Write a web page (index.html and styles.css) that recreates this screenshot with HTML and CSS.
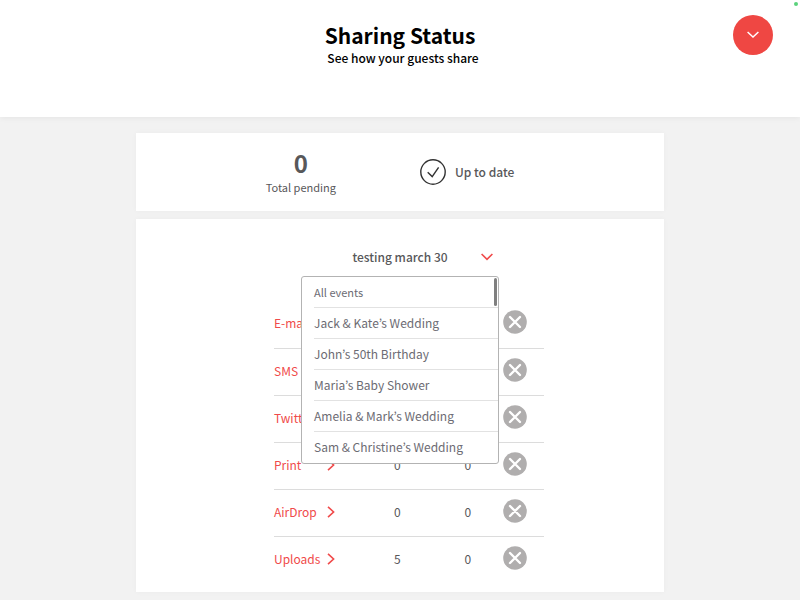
FILE: index.html
```
<!DOCTYPE html>
<html lang="en">
<head>
<meta charset="utf-8">
<meta name="viewport" content="width=device-width, initial-scale=1">
<title>Sharing Status</title>
<link rel="stylesheet" href="styles.css">
</head>

<body>
<svg class="sprite" aria-hidden="true">
  <symbol id="cross" viewBox="0 0 24 24">
    <circle cx="12" cy="12" r="11.8" fill="#b0aeae"/>
    <path d="M7 7 17 17M17 7 7 17" fill="none" stroke="#fff" stroke-width="2.4" stroke-linecap="round"/>
  </symbol>
  <symbol id="arrow" viewBox="0 0 8 12">
    <path d="M1 .8 6.6 6 1 11.2" fill="none" stroke="#f04a4a" stroke-width="1.6"/>
  </symbol>
</svg>

<header class="header">
  <h1 class="title">Sharing Status</h1>
  <p class="subtitle">See how your guests share</p>
  <button type="button" class="menu-button" aria-label="Menu">
    <svg width="12" height="8" viewBox="0 0 12 8"><path d="M.6 1 6 6 11.4 1" fill="none" stroke="#fff" stroke-width="1.5"/></svg>
  </button>
  <span class="online"></span>
</header>

<main class="content">
  <section class="card summary">
    <div class="pending">
      <strong class="pending-count">0</strong>
      <span class="pending-label">Total pending</span>
    </div>
    <div class="status">
      <svg width="26" height="26" viewBox="0 0 26 26"><circle cx="13" cy="13" r="12.2" fill="none" stroke="#333" stroke-width="1.4"/><path d="M7.7 13.2 12.2 17.6 18.6 8.4" fill="none" stroke="#333" stroke-width="1.4"/></svg>
      <span>Up to date</span>
    </div>
  </section>

  <section class="card sharing">
    <div class="picker">
      <button type="button" class="picker-button" aria-expanded="true" aria-controls="events">
        <span class="picker-label">testing march 30</span>
        <svg class="picker-arrow" width="12" height="8" viewBox="0 0 12 8"><path d="M.6 1 6 6.4 11.4 1" fill="none" stroke="#f04a4a" stroke-width="1.6"/></svg>
      </button>
      <ul class="events" id="events">
        <li><button type="button" class="event event-all">All events</button></li>
        <li><button type="button" class="event">Jack &amp; Kate’s Wedding</button></li>
        <li><button type="button" class="event">John’s 50th Birthday</button></li>
        <li><button type="button" class="event">Maria’s Baby Shower</button></li>
        <li><button type="button" class="event">Amelia &amp; Mark’s Wedding</button></li>
        <li><button type="button" class="event">Sam &amp; Christine’s Wedding</button></li>
      </ul>
      <span class="scroll-thumb"></span>
    </div>

    <div class="shares-wrap">
      <table class="shares">
        <tr>
          <td class="name"><a href="#email">E-mail <svg class="arrow"><use href="#arrow"/></svg></a></td>
          <td></td>
          <td></td>
          <td class="action"><button type="button" class="clear" aria-label="Clear E-mail"><svg><use href="#cross"/></svg></button></td>
        </tr>
        <tr>
          <td class="name"><a href="#sms">SMS <svg class="arrow"><use href="#arrow"/></svg></a></td>
          <td></td>
          <td></td>
          <td class="action"><button type="button" class="clear" aria-label="Clear SMS"><svg><use href="#cross"/></svg></button></td>
        </tr>
        <tr>
          <td class="name"><a href="#twitter">Twitter <svg class="arrow"><use href="#arrow"/></svg></a></td>
          <td></td>
          <td></td>
          <td class="action"><button type="button" class="clear" aria-label="Clear Twitter"><svg><use href="#cross"/></svg></button></td>
        </tr>
        <tr>
          <td class="name"><a href="#print">Print <svg class="arrow"><use href="#arrow"/></svg></a></td>
          <td>0</td>
          <td>0</td>
          <td class="action"><button type="button" class="clear" aria-label="Clear Print"><svg><use href="#cross"/></svg></button></td>
        </tr>
        <tr>
          <td class="name"><a href="#airdrop">AirDrop <svg class="arrow"><use href="#arrow"/></svg></a></td>
          <td>0</td>
          <td>0</td>
          <td class="action"><button type="button" class="clear" aria-label="Clear AirDrop"><svg><use href="#cross"/></svg></button></td>
        </tr>
        <tr>
          <td class="name"><a href="#uploads">Uploads <svg class="arrow"><use href="#arrow"/></svg></a></td>
          <td>5</td>
          <td>0</td>
          <td class="action"><button type="button" class="clear" aria-label="Clear Uploads"><svg><use href="#cross"/></svg></button></td>
        </tr>
      </table>
    </div>
  </section>
</main>
</body>
</html>
```

FILE: styles.css
```
* { box-sizing: border-box; }

body {
  margin: 0;
  background: #f2f2f2;
  color: #58585a;
  font-family: "Noto Sans CJK KR", "Noto Sans", sans-serif;
  font-size: 12px;
  line-height: 16px;
}

button {
  padding: 0;
  border: 0;
  background: none;
  color: inherit;
  font: inherit;
  cursor: pointer;
}

.sprite {
  position: absolute;
  width: 0;
  height: 0;
}

.header {
  position: relative;
  padding: 20px 0 51px;
  background: #fff;
  box-shadow: 0 1px 6px rgba(0, 0, 0, .06);
  color: #000;
  text-align: center;
}

.title {
  margin: 0;
  font-size: 21px;
  font-weight: bold;
  line-height: 30px;
}

.subtitle {
  margin: 0;
  padding-left: 6px;
  font-weight: 500;
}

.menu-button {
  display: flex;
  align-items: center;
  justify-content: center;
  position: absolute;
  top: 15px;
  right: 27px;
  width: 40px;
  height: 40px;
  border-radius: 50%;
  background: #ef4743;
}

.online {
  position: absolute;
  top: 2px;
  right: 2px;
  width: 4px;
  height: 4px;
  border-radius: 50%;
  background: #5bd27c;
}

.content {
  width: 66%;
  margin: 0 auto;
  padding: 16px 0 8px;
}

.card {
  background: #fff;
  box-shadow: 0 0 6px rgba(0, 0, 0, .03);
}

.summary {
  display: flex;
  align-items: center;
  justify-content: center;
  gap: 84px;
  margin-bottom: 8px;
  padding: 15px 20px 15px 0;
}

.pending {
  display: flex;
  flex-direction: column;
  align-items: center;
}

.pending-count {
  font-size: 24px;
  line-height: 30px;
}

.pending-label {
  font-size: 11px;
  line-height: 18px;
}

.status {
  display: flex;
  align-items: center;
  gap: 9px;
  font-weight: 500;
}

.sharing { padding: 28px 0 9px; }

.picker {
  position: relative;
  width: 198px;
  margin: 0 auto 34px;
}

.picker-button {
  display: grid;
  grid-template-columns: 1fr auto 1fr;
  align-items: center;
  width: 100%;
  padding: 0 6px;
  line-height: 20px;
  font-weight: 500;
}

.picker-label { grid-column: 2; }

.picker-arrow { justify-self: end; }

.events {
  position: absolute;
  top: 29px;
  left: 0;
  z-index: 10;
  width: 100%;
  height: 188px;
  margin: 0;
  padding: 0 0 0 12px;
  overflow: hidden;
  border: 1px solid #b3b3b3;
  border-radius: 3px;
  background: #fff;
  color: #6c6b73;
  list-style: none;
}

.events li { border-bottom: 1px solid #e2e2e2; }

.events li:last-child { border-bottom: 0; }

.event {
  display: block;
  width: 100%;
  line-height: 30px;
  text-align: left;
}

.event-all { font-size: 11px; }

.scroll-thumb {
  position: absolute;
  top: 31px;
  right: 2px;
  z-index: 11;
  width: 3px;
  height: 28px;
  border-radius: 2px;
  background: #808080;
}

/* room on the left so the clear buttons sit right of the picker */
.shares-wrap { padding-left: 18px; }

.shares {
  width: 270px;
  margin: 0 auto;
  border-collapse: collapse;
  table-layout: fixed;
}

.shares td {
  height: 47px;
  padding: 0 0 2px;
  border-bottom: 1px solid #dcdcdc;
  text-align: center;
}

.shares tr:last-child td { border-bottom: 0; }

.shares .name {
  width: 88px;
  text-align: left;
}

.name a {
  display: flex;
  align-items: center;
  justify-content: space-between;
  width: 61px;
  color: #f04a4a;
  text-decoration: none;
}

.arrow {
  width: 8px;
  height: 12px;
}

.shares .action {
  width: 41px;
  padding-bottom: 4px;
}

.clear {
  display: block;
  width: 24px;
  height: 24px;
}

.clear svg {
  display: block;
  width: 24px;
  height: 24px;
}
```
